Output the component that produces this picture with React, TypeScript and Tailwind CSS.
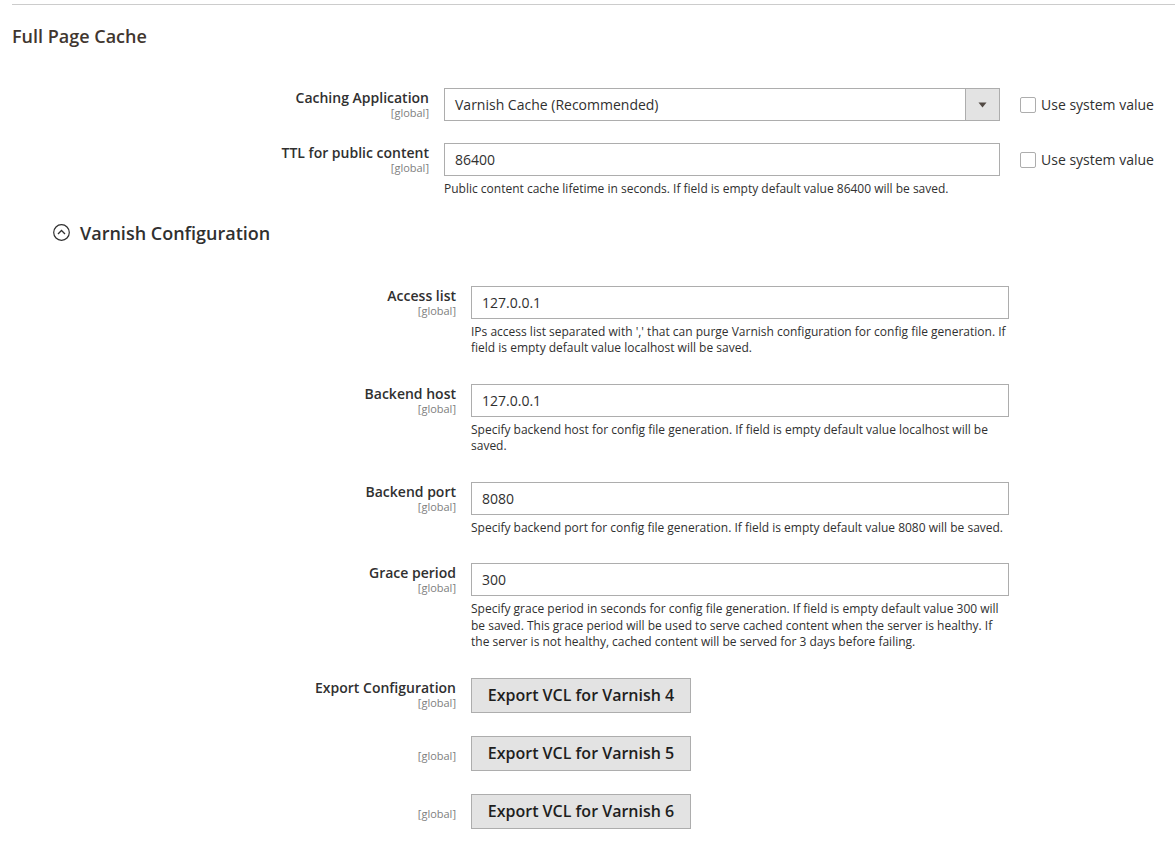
import React from "react";

const font = { fontFamily: '"Open Sans", "Liberation Sans", sans-serif' };

const Scope = ({ className = "" }: { className?: string }) => (
  <span className={`block text-[11px] leading-[12px] text-[#808080] ${className}`}>[global]</span>
);

const FieldLabel = ({ label, width }: { label: string; width: string }) => (
  <div className={`${width} shrink-0 text-right`}>
    <span className="block text-[14px] leading-[19px] font-semibold text-[#303030]">{label}</span>
    <Scope />
  </div>
);

const Note = ({ children }: { children: React.ReactNode }) => (
  <p className="mt-[5px] mb-[5px] text-[12px] leading-[16.5px] text-[#303030]">{children}</p>
);

const SystemValue = () => (
  <label className="flex shrink-0 items-center gap-[5px] ml-[5px] mt-[8px] h-[17px] whitespace-nowrap">
    <span className="w-[16px] h-[16px] border border-[#adadad] rounded-[2px] bg-white"></span>
    <span className="text-[14px] text-[#303030]">Use system value</span>
  </label>
);

const TextRow = ({ label, value, note }: { label: string; value: string; note?: string }) => (
  <div className="flex gap-[15px] pb-[22px]">
    <FieldLabel label={label} width="w-[444px]" />
    <div className="w-[538px] shrink-0">
      <div className="h-[33px] border border-[#adadad] bg-white flex items-center px-[10px] text-[14px] text-[#303030]">
        {value}
      </div>
      {note && <Note>{note}</Note>}
    </div>
  </div>
);

const ExportButton = ({ version, label }: { version: string; label?: string }) => (
  <div className="flex gap-[15px] pb-[23px]">
    {label ? (
      <FieldLabel label={label} width="w-[444px]" />
    ) : (
      <div className="w-[444px] shrink-0 text-right pt-[14px]">
        <Scope />
      </div>
    )}
    <button className="w-[220px] h-[35px] shrink-0 bg-[#e3e3e3] border border-[#adadad] text-[16px] font-semibold text-[#1e1e1e]">
      Export VCL for Varnish {version}
    </button>
  </div>
);

const App = () => {
  return (
    <div className="min-h-[850px] bg-white pt-[4px]" style={font}>
      <div className="ml-[12px] border-t border-[#cccccc]"></div>
      <div className="px-[12px]">
        <h2 className="mt-[19px] text-[18px] leading-[24px] font-semibold text-[#41362f]">Full Page Cache</h2>

        <div className="mt-[40px]">
          <div className="flex gap-[15px] pb-[22px]">
            <FieldLabel label="Caching Application" width="w-[417px]" />
            <div className="w-[556px] shrink-0 h-[33px] border border-[#adadad] bg-white flex items-center">
              <span className="flex-1 pl-[10px] text-[14px] text-[#303030]">Varnish Cache (Recommended)</span>
              <span className="w-[34px] h-full bg-[#e3e3e3] border-l border-[#adadad] flex items-center justify-center">
                <svg width="9" height="6" viewBox="0 0 9 6">
                  <path d="M0.5 0.5 H8.5 L4.5 5.5 Z" fill="#514943" />
                </svg>
              </span>
            </div>
            <SystemValue />
          </div>

          <div className="flex gap-[15px] pb-[22px]">
            <FieldLabel label="TTL for public content" width="w-[417px]" />
            <div className="w-[556px] shrink-0">
              <div className="h-[33px] border border-[#adadad] bg-white flex items-center px-[10px] text-[14px] text-[#303030]">
                86400
              </div>
              <p className="mt-[5px] text-[12px] leading-[16.5px] text-[#303030]">
                Public content cache lifetime in seconds. If field is empty default value 86400 will be saved.
              </p>
            </div>
            <SystemValue />
          </div>
        </div>

        <div className="flex items-center gap-[10px] ml-[41px] mt-[1px]">
          <svg width="17" height="17" viewBox="0 0 17 17">
            <circle cx="8.5" cy="8.5" r="7.8" fill="none" stroke="#303030" strokeWidth="1.2" />
            <path d="M5 10 L8.5 6.5 L12 10" fill="none" stroke="#303030" strokeWidth="1.3" />
          </svg>
          <h3 className="text-[18px] leading-[24px] font-semibold text-[#303030]">Varnish Configuration</h3>
        </div>

        <div className="mt-[41px]">
          <TextRow
            label="Access list"
            value="127.0.0.1"
            note="IPs access list separated with ',' that can purge Varnish configuration for config file generation. If field is empty default value localhost will be saved."
          />
          <TextRow
            label="Backend host"
            value="127.0.0.1"
            note="Specify backend host for config file generation. If field is empty default value localhost will be saved."
          />
          <TextRow
            label="Backend port"
            value="8080"
            note="Specify backend port for config file generation. If field is empty default value 8080 will be saved."
          />
          <TextRow
            label="Grace period"
            value="300"
            note="Specify grace period in seconds for config file generation. If field is empty default value 300 will be saved. This grace period will be used to serve cached content when the server is healthy. If the server is not healthy, cached content will be served for 3 days before failing."
          />
          <ExportButton label="Export Configuration" version="4" />
          <ExportButton version="5" />
          <ExportButton version="6" />
        </div>
      </div>
    </div>
  );
};

export default App;
